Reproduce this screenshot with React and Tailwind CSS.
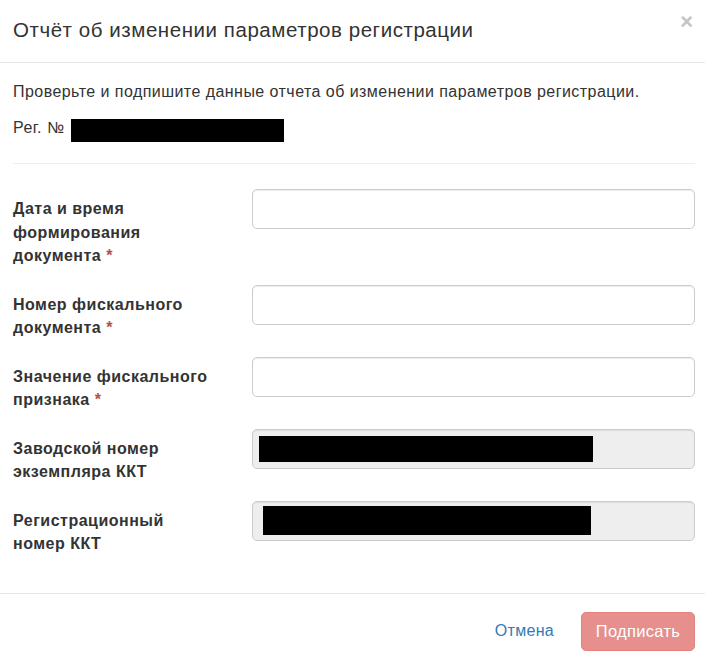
export default function App() {
  return (
    <div className="w-[705px] h-[663px] bg-white text-[#333] font-['Liberation_Sans',Arial,sans-serif] overflow-hidden">
      <div className="h-[63px] border-b border-[#e5e5e5] flex items-start justify-between pl-[13px] pr-[12px]">
        <h4 className="mt-[15px] text-[20.5px] leading-[29px] tracking-[0.55px]">Отчёт об изменении параметров регистрации</h4>
        <button className="mt-[9px] text-[22px] font-bold leading-[25px] text-[#c4c4c4]">×</button>
      </div>

      <div className="pl-[13px] pr-[10px] pt-[17px] text-[16px] leading-[23px] tracking-[0.45px]">
        <p className="mb-[13px]">Проверьте и подпишите данные отчета об изменении параметров регистрации.</p>
        <div className="flex items-start gap-[6px]">
          <span>Рег. №</span>
          <span className="mt-[3px] h-[23px] w-[213px] bg-black" />
        </div>
        <hr className="mt-[21px] mb-[25px] border-[#eee]" />

        <FormRow label="Дата и время формирования" last="документа" required />
        <FormRow label="Номер фискального" last="документа" required />
        <FormRow label="Значение фискального" last="признака" required />
        <FormRow label="Заводской номер экземпляра ККТ" disabled box="ml-[6px] w-[334px]" />
        <FormRow label="Регистрационный номер ККТ" disabled box="ml-[10px] w-[328px] h-[29px]" />
        <div className="h-[20px]" />
      </div>

      <div className="border-t border-[#e5e5e5] flex items-center justify-end pt-[18px] pr-[10px]">
        <button className="mr-[27px] text-[16px] tracking-[0.3px] text-[#337ab7]">Отмена</button>
        <button className="h-[39px] w-[114px] rounded-[5px] bg-[#e68f8c] border border-[#e2827e] text-white text-[16.5px] tracking-[0.3px]">Подписать</button>
      </div>
    </div>
  );
}

function FormRow({ label, last, required, disabled, box }) {
  return (
    <div className="flex items-start mb-[17px]">
      <label className="w-[239px] pr-[37px] pt-[8px] font-bold leading-[23.5px] tracking-[0.5px]">
        {required ? (
          <>
            <span className="block">{label}</span>
            <span className="flex gap-[5px]">
              <span>{last}</span>
              <span className="text-[#b0504c]">*</span>
            </span>
          </>
        ) : (
          label
        )}
      </label>
      <div
        className={`flex-1 h-[40px] rounded-[5px] border border-[#ccc] shadow-[inset_0_1px_1px_rgba(0,0,0,0.075)] flex items-center ${disabled ? "bg-[#eee]" : "bg-white"}`}
      >
        {disabled && <span className={`h-[26px] bg-black ${box}`} />}
      </div>
    </div>
  );
}
